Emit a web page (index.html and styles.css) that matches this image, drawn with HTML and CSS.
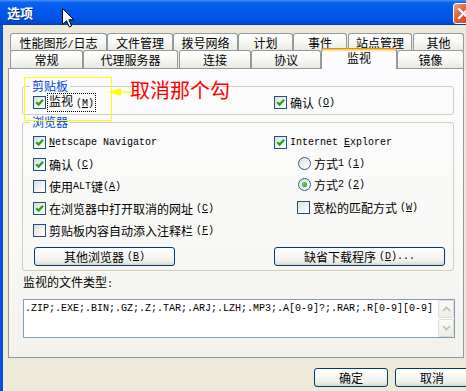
FILE: index.html
```html
<!DOCTYPE html>
<html>
<head>
<meta charset="utf-8">
<title>选项</title>
<link rel="stylesheet" href="styles.css">
</head>
<body>
<div class="window">
  <div class="titlebar">
    <span class="title">选项</span>
    <span class="close"><svg width="21" height="21" viewBox="0 0 21 21"><path d="M6 6 L15 15 M15 6 L6 15" stroke="#fff" stroke-width="2.2" stroke-linecap="square"/></svg></span>
  </div>
  <div class="frame">
    <div class="tabs">
      <div class="tabrow back">
        <div class="tab">性能图形<span class="en">/</span>日志</div>
        <div class="tab">文件管理</div>
        <div class="tab">拨号网络</div>
        <div class="tab">计划</div>
        <div class="tab">事件</div>
        <div class="tab">站点管理</div>
        <div class="tab">其他</div>
      </div>
      <div class="tabrow front">
        <div class="tab">常规</div>
        <div class="tab">代理服务器</div>
        <div class="tab">连接</div>
        <div class="tab">协议</div>
        <div class="tab sel">监视</div>
        <div class="tab">镜像</div>
      </div>
    </div>
    <div class="panel">
      <fieldset class="group g1">
        <legend>剪贴板</legend>
        <div class="cols">
          <div class="col">
            <div class="item"><span class="cb"><svg width="11" height="11" viewBox="0 0 11 11"><path d="M2.2 5.2 L4.6 7.6 L9 2.8" fill="none" stroke="#21A121" stroke-width="2.2"/></svg></span><span class="focus">监视<span class="en mn">(<u>M</u>)</span></span></div>
          </div>
          <div class="col">
            <div class="item"><span class="cb"><svg width="11" height="11" viewBox="0 0 11 11"><path d="M2.2 5.2 L4.6 7.6 L9 2.8" fill="none" stroke="#21A121" stroke-width="2.2"/></svg></span>确认<span class="en mn">(<u>O</u>)</span></div>
          </div>
        </div>
      </fieldset>
      <fieldset class="group g2">
        <legend>浏览器</legend>
        <div class="cols">
          <div class="col">
            <div class="item"><span class="cb"><svg width="11" height="11" viewBox="0 0 11 11"><path d="M2.2 5.2 L4.6 7.6 L9 2.8" fill="none" stroke="#21A121" stroke-width="2.2"/></svg></span><span class="en"><u>N</u>etscape Navigator</span></div>
            <div class="item"><span class="cb"><svg width="11" height="11" viewBox="0 0 11 11"><path d="M2.2 5.2 L4.6 7.6 L9 2.8" fill="none" stroke="#21A121" stroke-width="2.2"/></svg></span>确认<span class="en mn">(<u>C</u>)</span></div>
            <div class="item"><span class="cb"></span>使用<span class="en">ALT</span>键<span class="en">(<u>A</u>)</span></div>
            <div class="item"><span class="cb"><svg width="11" height="11" viewBox="0 0 11 11"><path d="M2.2 5.2 L4.6 7.6 L9 2.8" fill="none" stroke="#21A121" stroke-width="2.2"/></svg></span>在浏览器中打开取消的网址<span class="en mn">(<u>C</u>)</span></div>
            <div class="item"><span class="cb"></span>剪贴板内容自动添入注释栏<span class="en mn">(<u>F</u>)</span></div>
          </div>
          <div class="col">
            <div class="item r1"><span class="cb"><svg width="11" height="11" viewBox="0 0 11 11"><path d="M2.2 5.2 L4.6 7.6 L9 2.8" fill="none" stroke="#21A121" stroke-width="2.2"/></svg></span><span class="en">Internet <u>E</u>xplorer</span></div>
            <div class="item sub r2"><span class="rb"></span>方式<span class="en">1</span><span class="en mn">(<u>1</u>)</span></div>
            <div class="item sub r3"><span class="rb on"><span class="dot"></span></span>方式<span class="en">2</span><span class="en mn">(<u>2</u>)</span></div>
            <div class="item sub r4"><span class="cb"></span>宽松的匹配方式<span class="en mn">(<u>W</u>)</span></div>
          </div>
        </div>
        <div class="cols btnrow">
          <div class="btn b-other">其他浏览器<span class="en mn">(<u>B</u>)</span></div>
          <div class="btn b-dl">缺省下载程序<span class="en mn">(<u>D</u>)...</span></div>
        </div>
      </fieldset>
      <div class="label">监视的文件类型<span class="en">:</span></div>
      <div class="textbox">
        <div class="txt">.ZIP;.EXE;.BIN;.GZ;.Z;.TAR;.ARJ;.LZH;.MP3;.A[0-9]?;.RAR;.R[0-9][0-9]</div>
        <div class="sb">
          <div class="sbtn"><svg width="9" height="6" viewBox="0 0 9 6"><path d="M1 5 L4.5 1.5 L8 5" fill="none" stroke="#BDBDB2" stroke-width="1.6"/></svg></div>
          <div class="sbtn"><svg width="9" height="6" viewBox="0 0 9 6"><path d="M1 1 L4.5 4.5 L8 1" fill="none" stroke="#BDBDB2" stroke-width="1.6"/></svg></div>
        </div>
      </div>
    </div>
    <div class="footer">
      <div class="btn dlg">确定</div>
      <div class="btn dlg">取消</div>
    </div>
  </div>

  <div class="ann-box"></div>
  <svg class="ann-arrow" width="26" height="10" viewBox="0 0 26 10"><path d="M10 5 L26 5" stroke="#FFFF00" stroke-width="1.4"/><path d="M1 5 L14 1.3 L14 8.7 Z" fill="#FFFF00"/></svg>
  <div class="ann-text">取消那个勾</div>
  <svg class="cursor" width="13" height="20" viewBox="0 0 13 20"><path d="M0.5 0.5 L0.5 16.5 L4.5 12.8 L7.3 19 L9.6 18 L6.9 11.8 L11.8 11.8 Z" fill="#fff" stroke="#000" stroke-width="1" stroke-linejoin="miter"/></svg>
</div>
</body>
</html>
```

FILE: styles.css
```css
* { box-sizing: border-box; }
html, body { margin: 0; padding: 0; }
body {
  width: 466px;
  height: 391px;
  overflow: hidden;
  background: #ECE9D8;
  font-family: "Noto Sans CJK SC", sans-serif;
  font-size: 12px;
  color: #000;
}
.window {
  position: relative;
  width: 466px;
  height: 391px;
  overflow: hidden;
  background: #ECE9D8;
  display: flex;
  flex-direction: column;
}
.titlebar {
  height: 25px;
  flex: none;
  display: flex;
  align-items: center;
  padding-left: 7px;
  background: linear-gradient(#4A94FA 0%, #0A64F0 10%, #0059EC 40%, #0054E3 72%, #004AD3 92%, #003DB8 100%);
}
.title {
  color: #fff;
  font-weight: bold;
  font-size: 13px;
  line-height: 16px;
  margin-top: 1px;
  text-shadow: 1px 1px 0 #0A2A8A;
}
.close {
  margin-left: auto;
  margin-right: -8px;
  margin-top: 1px;
  width: 21px;
  height: 21px;
  flex: none;
  border: 1px solid #fff;
  border-radius: 3px;
  background: linear-gradient(135deg, #F0A48C 0%, #E26A45 35%, #D2461E 80%, #C23A12 100%);
  display: flex;
  align-items: center;
  justify-content: center;
}
.close svg { margin: -1px; }

.frame {
  flex: 1;
  display: flex;
  flex-direction: column;
  border-left: 3px solid #0A4FDB;
  padding: 8px 0 0 5px;
}
.tabs { margin-left: 2px; flex: none; }
.tabrow {
  display: flex;
  align-items: flex-end;
  height: 18px;
}
.tabrow.front { margin-top: -1px; }
.tab {
  flex: none;
  height: 18px;
  border: 1px solid #919B9C;
  border-bottom: none;
  border-radius: 3px 3px 0 0;
  background: linear-gradient(#FFFFFF, #F7F7F4 50%, #E9E8E1);
  text-align: center;
  line-height: 17px;
  white-space: nowrap;
}
.back .tab:nth-child(1) { width: 97px; }
.back .tab:nth-child(2) { width: 66px; }
.back .tab:nth-child(3) { width: 65px; }
.back .tab:nth-child(4) { width: 55px; }
.back .tab:nth-child(5) { width: 54px; }
.back .tab:nth-child(6) { width: 64px; margin-left: 1px; }
.back .tab:nth-child(7) { width: 51px; margin-left: 1px; }
.front .tab:nth-child(1) { width: 73px; }
.front .tab:nth-child(2) { width: 95px; }
.front .tab:nth-child(3) { width: 72px; margin-left: 1px; }
.front .tab:nth-child(4) { width: 70px; }
.front .tab:nth-child(5) { width: 76px; }
.front .tab:nth-child(6) { width: 67px; }
.tab.sel {
  height: 21px;
  margin-bottom: -1px;
  position: relative;
  z-index: 2;
  background: #FCFCFE;
  border-top: 1px solid #E68B2C;
  box-shadow: inset 0 1px 0 #FFC83C, inset 0 2px 0 #FFE39A;
  line-height: 18px;
}

.panel {
  flex: none;
  width: 456px;
  height: 290px;
  border: 1px solid #919B9C;
  background: linear-gradient(#FCFCFE, #F8F8F5 60%, #F2F1EC);
  padding: 10px 0 0 13px;
}
fieldset.group {
  margin: 0;
  width: 432px;
  min-inline-size: 0;
  border: 1px solid #D0D0BF;
  border-radius: 3px;
  padding: 2px 9px 4px 10px;
}
fieldset.group legend {
  padding: 0 2px;
  margin-left: -3px;
  color: #0046D5;
  font-size: 12px;
  line-height: 14px;
}
.g2 { margin-top: 2px; padding-top: 1px; }
.cols {
  display: grid;
  grid-template-columns: 241px 1fr;
}
.item {
  display: flex;
  align-items: center;
  white-space: nowrap;
  height: 22px;
}
.g1 .item { height: 15px; }
.r1 { height: 22px; }
.r2 { height: 21px; }
.r3 { height: 21px; }
.r4 { height: 24px; }
.sub { padding-left: 23px; }
.cb {
  width: 13px;
  height: 13px;
  flex: none;
  border: 1px solid #1C5180;
  background: linear-gradient(135deg, #DCDCD7 0%, #F0F0EC 50%, #FFFFFF 100%);
  margin-right: 3px;
  display: inline-flex;
  align-items: center;
  justify-content: center;
}
.rb {
  width: 13px;
  height: 13px;
  flex: none;
  border: 1px solid #2F5C8C;
  border-radius: 50%;
  background: linear-gradient(135deg, #DCDCD7 0%, #F0F0EC 50%, #FFFFFF 100%);
  margin-right: 3px;
  margin-left: 1px;
  display: inline-flex;
  align-items: center;
  justify-content: center;
}
.rb .dot {
  width: 5px;
  height: 5px;
  border-radius: 50%;
  background: radial-gradient(circle at 40% 40%, #7EDC7E, #21A121 70%);
}
.en {
  font-family: "Liberation Mono", monospace;
  font-size: 10px;
}
.mn { margin-left: 3px; }
.focus {
  outline: 1px dotted #000;
  outline-offset: 0;
  padding: 0 1px;
  margin-left: -1px;
  line-height: 14px;
}

.btnrow { margin-top: 6px; }
.btn {
  height: 19px;
  border: 1px solid #003C74;
  border-radius: 3px;
  background: linear-gradient(#FFFFFF 0%, #FAFAF8 30%, #F0EFEA 75%, #E3E0D6 92%, #D6D0C5 100%);
  display: flex;
  align-items: center;
  justify-content: center;
  white-space: nowrap;
  line-height: 16px;
}
.b-other { width: 141px; margin-left: 1px; }
.b-dl { width: 171px; }

.label {
  margin: 4px 0 0 1px;
  line-height: 14px;
}
.textbox {
  margin: 7px 0 0 1px;
  width: 432px;
  height: 39px;
  border: 1px solid #7F9DB9;
  background: #fff;
  display: flex;
}
.txt {
  flex: 1;
  padding: 3px 0 0 1px;
  font-family: "Liberation Mono", monospace;
  font-size: 10px;
  line-height: 12px;
  white-space: nowrap;
  overflow: hidden;
}
.sb {
  width: 16px;
  flex: none;
  display: flex;
  flex-direction: column;
  gap: 1px;
}
.sbtn {
  flex: 1;
  border: 1px solid #DCDCD3;
  border-radius: 2px;
  background: linear-gradient(#FAFAF8, #EEEEE8);
  display: flex;
  align-items: center;
  justify-content: center;
}

.footer {
  display: flex;
  gap: 7px;
  margin: 10px 0 0 306px;
  flex: none;
}
.btn.dlg { width: 74px; flex: none; }

.ann-box {
  position: absolute;
  left: 24px;
  top: 77px;
  width: 88px;
  height: 44px;
  border: 1px solid #FFFF00;
}
.ann-arrow {
  position: absolute;
  left: 107px;
  top: 87px;
}
.ann-text {
  position: absolute;
  left: 130px;
  top: 80px;
  color: #FF0000;
  font-size: 20px;
  line-height: 20px;
  white-space: nowrap;
}
.cursor {
  position: absolute;
  left: 62px;
  top: 8px;
}
```
